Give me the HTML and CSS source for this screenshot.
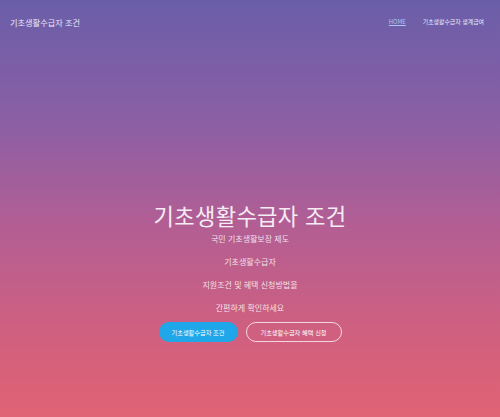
FILE: index.html
```html
<!DOCTYPE html>
<html lang="ko">
<head>
<meta charset="utf-8">
<title>기초생활수급자 조건</title>
<link rel="stylesheet" href="styles.css">
</head>
<body>
<div class="page">
  <header class="nav">
    <div class="brand">기초생활수급자 조건</div>
    <nav class="links">
      <a class="link active" href="#">HOME</a>
      <a class="link" href="#">기초생활수급자 생계급여</a>
    </nav>
  </header>
  <main class="hero">
    <h1 class="title">기초생활수급자 조건</h1>
    <p class="line">국민 기초생활보장 제도</p>
    <p class="line">기초생활수급자</p>
    <p class="line">지원조건 및 혜택 신청방법을</p>
    <p class="line">간편하게 확인하세요</p>
    <div class="buttons">
      <a class="btn btn-solid" href="#">기초생활수급자 조건</a>
      <a class="btn btn-outline" href="#">기초생활수급자 혜택 신청</a>
    </div>
  </main>
</div>
</body>
</html>
```
FILE: styles.css
```css
html, body {
  margin: 0;
  padding: 0;
}
body {
  font-family: "Noto Sans CJK KR", "Noto Sans", sans-serif;
  color: #fff;
}
.page {
  width: 500px;
  height: 417px;
  overflow: hidden;
  background: linear-gradient(180deg, #6a5ea9 0%, #8c5fa4 30%, #b45e93 55%, #d0607f 80%, #e06274 100%);
}
.nav {
  display: flex;
  justify-content: space-between;
  align-items: center;
  height: 44px;
  padding: 0 16px 0 10px;
}
.brand {
  font-size: 8.2px;
  line-height: 10px;
  font-weight: 400;
  color: #ece8f6;
}
.links {
  display: flex;
  align-items: center;
  gap: 17px;
}
.link {
  font-size: 5.9px;
  line-height: 8px;
  color: #eeeaf6;
  text-decoration: none;
}
.link.active {
  color: #a9c8f0;
  text-decoration: underline;
}
.hero {
  display: flex;
  flex-direction: column;
  align-items: center;
  padding-top: 158px;
}
.title {
  margin: 0;
  font-size: 22.2px;
  line-height: 26px;
  font-weight: 400;
  color: #f5ecf4;
  letter-spacing: 0.3px;
}
.line {
  margin: 0;
  font-size: 8px;
  line-height: 10px;
  color: rgba(255, 255, 255, 0.82);
}
.title + .line {
  margin-top: 6px;
}
.line + .line {
  margin-top: 13px;
}
.buttons {
  display: flex;
  gap: 8px;
  margin-top: 9px;
}
.btn {
  display: flex;
  align-items: center;
  justify-content: center;
  height: 20px;
  border-radius: 10px;
  font-size: 6.2px;
  color: #fff;
  text-decoration: none;
  box-sizing: border-box;
}
.btn-solid {
  width: 79px;
  background: #1fa7e9;
}
.btn-outline {
  width: 96px;
  border: 1.5px solid rgba(255, 255, 255, 0.75);
}
```
